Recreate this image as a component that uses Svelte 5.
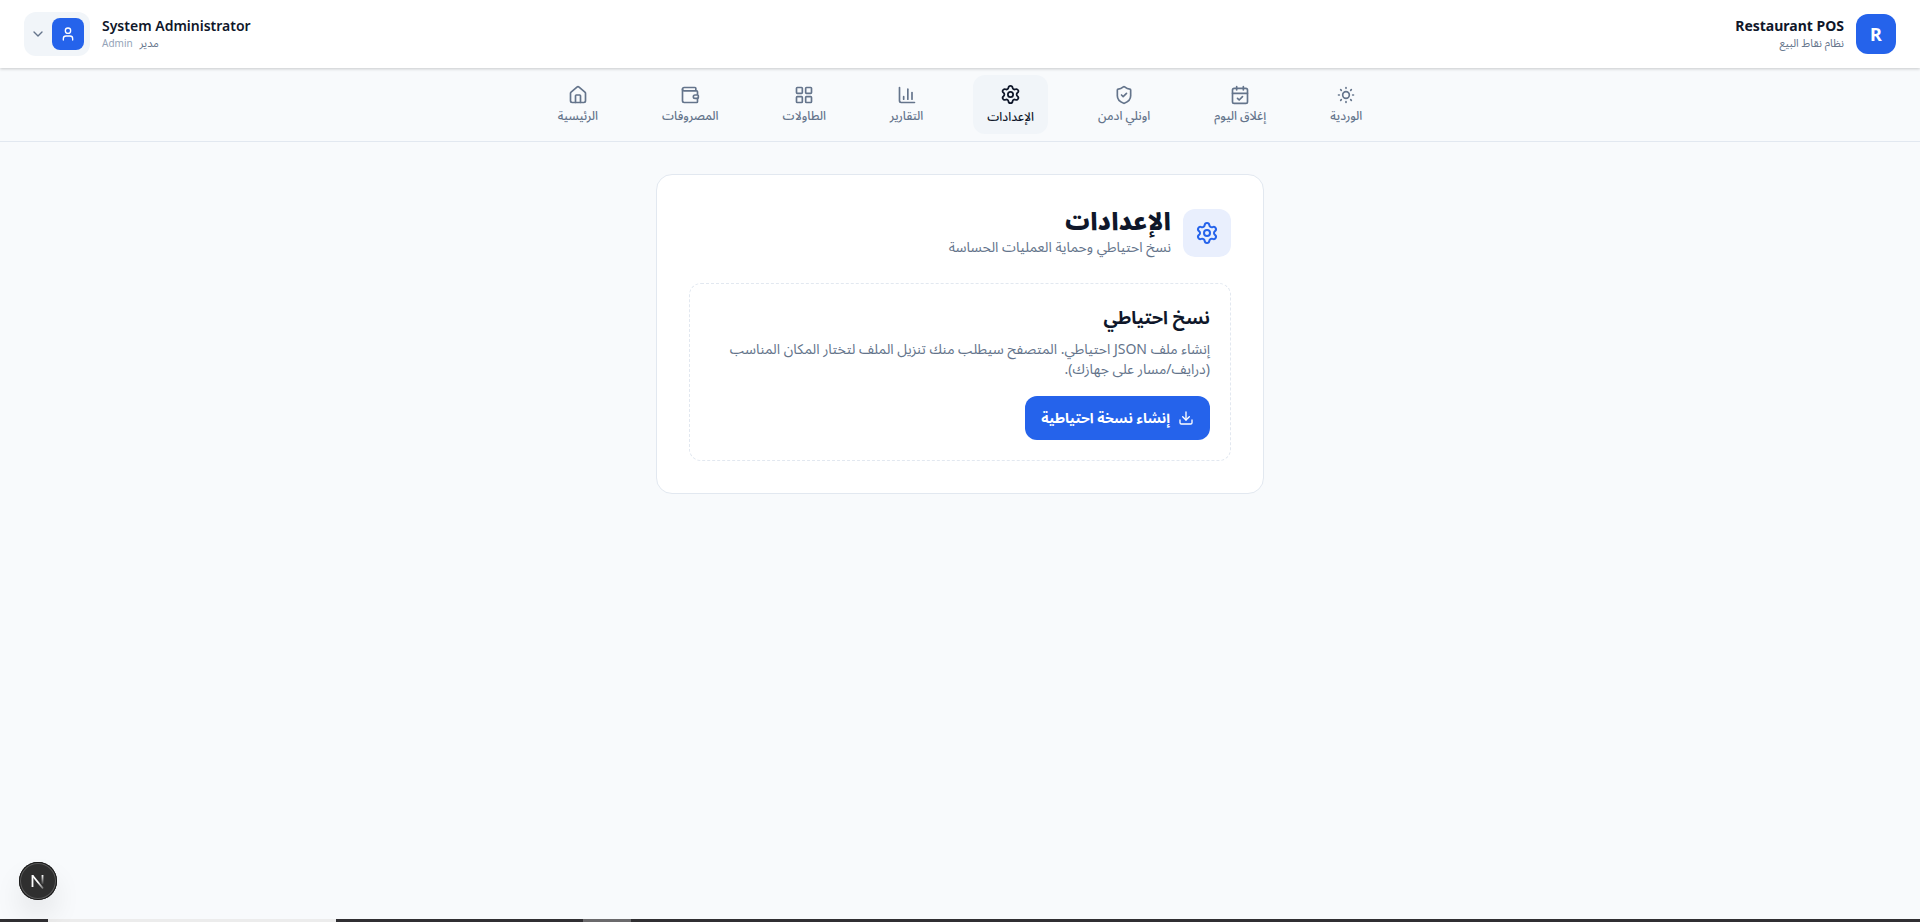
<script lang="ts">
	type NavItem = { label: string; icon: string; active?: boolean };

	// first item sits on the right
	const items: NavItem[] = [
		{ label: 'الوردية', icon: 'sun' },
		{ label: 'إغلاق اليوم', icon: 'calendar' },
		{ label: 'اونلي ادمن', icon: 'shield' },
		{ label: 'الإعدادات', icon: 'settings', active: true },
		{ label: 'التقارير', icon: 'chart' },
		{ label: 'الطاولات', icon: 'grid' },
		{ label: 'المصروفات', icon: 'wallet' },
		{ label: 'الرئيسية', icon: 'home' }
	];

	const icons: Record<string, string[]> = {
		sun: [
			'M16 12a4 4 0 1 1-8 0 4 4 0 0 1 8 0z',
			'M12 3v1', 'M12 20v1', 'M3 12h1', 'M20 12h1',
			'm18.364 5.636-.707.707', 'm6.343 17.657-.707.707',
			'm5.636 5.636.707.707', 'm17.657 17.657.707.707'
		],
		calendar: [
			'M8 2v4', 'M16 2v4',
			'M5 4h14a2 2 0 0 1 2 2v14a2 2 0 0 1-2 2H5a2 2 0 0 1-2-2V6a2 2 0 0 1 2-2z',
			'M3 10h18', 'm9 16 2 2 4-4'
		],
		shield: [
			'M20 13c0 5-3.5 7.5-7.66 8.95a1 1 0 0 1-.67-.01C7.5 20.5 4 18 4 13V6a1 1 0 0 1 1-1c2 0 4.5-1.2 6.24-2.72a1.17 1.17 0 0 1 1.52 0C14.51 3.81 17 5 19 5a1 1 0 0 1 1 1z',
			'm9 12 2 2 4-4'
		],
		settings: [
			'M9.671 4.136a2.34 2.34 0 0 1 4.659 0 2.34 2.34 0 0 0 3.319 1.915 2.34 2.34 0 0 1 2.33 4.033 2.34 2.34 0 0 0 0 3.831 2.34 2.34 0 0 1-2.33 4.033 2.34 2.34 0 0 0-3.319 1.915 2.34 2.34 0 0 1-4.659 0 2.34 2.34 0 0 0-3.32-1.915 2.34 2.34 0 0 1-2.33-4.033 2.34 2.34 0 0 0 0-3.831A2.34 2.34 0 0 1 6.35 6.051a2.34 2.34 0 0 0 3.319-1.915',
			'M15 12a3 3 0 1 1-6 0 3 3 0 0 1 6 0z'
		],
		chart: ['M3 3v16a2 2 0 0 0 2 2h16', 'M18 17V9', 'M13 17V5', 'M8 17v-3'],
		grid: [
			'M4 3h5a1 1 0 0 1 1 1v5a1 1 0 0 1-1 1H4a1 1 0 0 1-1-1V4a1 1 0 0 1 1-1z',
			'M15 3h5a1 1 0 0 1 1 1v5a1 1 0 0 1-1 1h-5a1 1 0 0 1-1-1V4a1 1 0 0 1 1-1z',
			'M15 14h5a1 1 0 0 1 1 1v5a1 1 0 0 1-1 1h-5a1 1 0 0 1-1-1v-5a1 1 0 0 1 1-1z',
			'M4 14h5a1 1 0 0 1 1 1v5a1 1 0 0 1-1 1H4a1 1 0 0 1-1-1v-5a1 1 0 0 1 1-1z'
		],
		wallet: [
			'M19 7V4a1 1 0 0 0-1-1H5a2 2 0 0 0 0 4h15a1 1 0 0 1 1 1v4h-3a2 2 0 0 0 0 4h3a1 1 0 0 0 1-1v-2a1 1 0 0 0-1-1',
			'M3 5v14a2 2 0 0 0 2 2h15a1 1 0 0 0 1-1v-4'
		],
		home: [
			'M15 21v-8a1 1 0 0 0-1-1h-4a1 1 0 0 0-1 1v8',
			'M3 10a2 2 0 0 1 .709-1.528l7-6a2 2 0 0 1 2.582 0l7 6A2 2 0 0 1 21 10v9a2 2 0 0 1-2 2H5a2 2 0 0 1-2-2z'
		],
		user: ['M19 21v-2a4 4 0 0 0-4-4H9a4 4 0 0 0-4 4v2', 'M16 7a4 4 0 1 1-8 0 4 4 0 0 1 8 0z'],
		chevron: ['m6 9 6 6 6-6'],
		download: ['M12 3v12', 'm7 10 5 5 5-5', 'M21 15v4a2 2 0 0 1-2 2H5a2 2 0 0 1-2-2v-4']
	};
</script>

{#snippet icon(name: string, size: number)}
	<svg class="icon" width={size} height={size} viewBox="0 0 24 24" aria-hidden="true">
		{#each icons[name] as d}
			<path {d} />
		{/each}
	</svg>
{/snippet}

<div class="page" dir="rtl">
	<header>
		<div class="brand">
			<div class="logo">R</div>
			<div>
				<div class="name">Restaurant POS</div>
				<div class="sub">نظام نقاط البيع</div>
			</div>
		</div>
		<div class="account">
			<div class="who">
				<div class="name">System Administrator</div>
				<div class="sub">مدير <span class="role">Admin</span></div>
			</div>
			<button class="user-menu" aria-label="System Administrator">
				<span class="avatar">{@render icon('user', 16)}</span>
				{@render icon('chevron', 16)}
			</button>
		</div>
	</header>

	<nav>
		{#each items as item}
			<a href="#{item.icon}" class:active={item.active}>
				{@render icon(item.icon, item.active ? 21 : 20)}
				<span>{item.label}</span>
			</a>
		{/each}
	</nav>

	<main>
		<section class="card">
			<div class="card-head">
				<div class="badge">{@render icon('settings', 24)}</div>
				<div class="title">
					<h1>الإعدادات</h1>
					<p>نسخ احتياطي وحماية العمليات الحساسة</p>
				</div>
			</div>
			<div class="panel">
				<h2>نسخ احتياطي</h2>
				<p>إنشاء ملف JSON احتياطي. المتصفح سيطلب منك تنزيل الملف لتختار المكان المناسب (درايف/مسار على جهازك).</p>
				<button class="primary">
					{@render icon('download', 16)}
					إنشاء نسخة احتياطية
				</button>
			</div>
		</section>
	</main>

	<div class="taskbar">
		<span class="window"></span>
		<span class="thumb"></span>
	</div>

	<button class="dev-tools" aria-label="Next.js">
		<svg width="38" height="38" viewBox="0 0 38 38" fill="none" aria-hidden="true">
			<defs>
				<linearGradient id="stem" x1="0" y1="13" x2="0" y2="23" gradientUnits="userSpaceOnUse">
					<stop stop-color="#fff" />
					<stop offset="1" stop-color="#fff" stop-opacity="0" />
				</linearGradient>
				<linearGradient id="diagonal" x1="19" y1="20" x2="24" y2="27" gradientUnits="userSpaceOnUse">
					<stop stop-color="#fff" />
					<stop offset="1" stop-color="#fff" stop-opacity="0.3" />
				</linearGradient>
			</defs>
			<path d="M13.5 25V13" stroke="#fff" stroke-width="1.8" />
			<path d="M13.5 13.5 24 26.5" stroke="url(#diagonal)" stroke-width="1.8" />
			<path d="M23.5 13v9" stroke="url(#stem)" stroke-width="1.8" />
		</svg>
	</button>
</div>

<style>
	:global(body) {
		margin: 0;
		background: #f8fafc;
	}
	.page {
		display: flex;
		flex-direction: column;
		min-height: 100vh;
		color: #0f172a;
		font-family: "Noto Sans", "Noto Sans Arabic", sans-serif;
		font-size: 14px;
		line-height: 20px;
	}
	h1, h2, p {
		margin: 0;
	}
	button {
		font: inherit;
		border: none;
		cursor: pointer;
	}
	.icon {
		flex: none;
		fill: none;
		stroke: currentColor;
		stroke-width: 2;
		stroke-linecap: round;
		stroke-linejoin: round;
	}

	header {
		position: relative;
		display: flex;
		justify-content: space-between;
		align-items: center;
		padding: 12px 24px;
		background: #fff;
		box-shadow: 0 1px 3px rgba(0, 0, 0, 0.2);
	}
	.brand, .account {
		display: flex;
		align-items: center;
		gap: 12px;
	}
	.logo {
		display: flex;
		align-items: center;
		justify-content: center;
		width: 40px;
		height: 40px;
		border-radius: 12px;
		background: #2563eb;
		color: #fff;
		font-size: 18px;
		font-weight: 700;
	}
	.name {
		font-weight: 600;
		line-height: 18px;
	}
	.brand .name {
		font-weight: 700;
	}
	.sub {
		color: #64748b;
		font-size: 11px;
		line-height: 16px;
	}
	.who {
		text-align: left;
	}
	.role {
		margin-right: 4px;
		color: #94a3b8;
		font-size: 10px;
	}
	.user-menu {
		display: flex;
		align-items: center;
		gap: 6px;
		padding: 6px;
		border-radius: 12px;
		background: #f1f5f9;
		color: #64748b;
	}
	.avatar {
		display: flex;
		align-items: center;
		justify-content: center;
		width: 32px;
		height: 32px;
		border-radius: 8px;
		background: #2563eb;
		color: #fff;
	}

	nav {
		display: flex;
		justify-content: center;
		align-items: center;
		gap: 40px;
		padding: 7px 16px;
		border-bottom: 1px solid #e2e8f0;
	}
	nav a {
		display: flex;
		flex-direction: column;
		align-items: center;
		gap: 3px;
		padding: 8px 12px;
		border-radius: 12px;
		color: #64748b;
		font-size: 12px;
		font-weight: 500;
		line-height: 16px;
		text-decoration: none;
	}
	nav a.active {
		margin: 0 -2px;
		padding: 9px 14px 8px;
		background: #f1f5f9;
		color: #0f172a;
		line-height: 18px;
	}

	main {
		flex: 1;
		padding: 32px 16px;
	}
	.card {
		box-sizing: border-box;
		max-width: 608px;
		margin: 0 auto;
		padding: 32px;
		border: 1px solid #e2e8f0;
		border-radius: 16px;
		background: #fff;
	}
	.card-head {
		display: flex;
		align-items: center;
		gap: 12px;
		margin-bottom: 24px;
	}
	.badge {
		display: flex;
		align-items: center;
		justify-content: center;
		width: 48px;
		height: 48px;
		border-radius: 12px;
		background: #e9effd;
		color: #2563eb;
	}
	.title {
		padding-bottom: 2px;
	}
	h1 {
		margin-bottom: 2px;
		font-size: 24px;
		font-weight: 900;
		line-height: 28px;
	}
	p {
		color: #64748b;
	}
	.panel {
		padding: 20px;
		border: 1px dashed #e2e8f0;
		border-radius: 12px;
	}
	h2 {
		margin-bottom: 9px;
		font-size: 18px;
		font-weight: 700;
		line-height: 26px;
	}
	.primary {
		display: flex;
		align-items: center;
		gap: 8px;
		margin-top: 17px;
		padding: 12px 16px;
		border-radius: 12px;
		background: #2563eb;
		color: #fff;
		font-weight: 700;
	}

	.taskbar {
		display: flex;
		direction: ltr;
		height: 3px;
		background: #302f32;
	}
	.window {
		width: 15%;
		margin-left: 48px;
		background: #ececec;
	}
	.thumb {
		width: 48px;
		margin-left: 247px;
		background: #6b6a6c;
	}
	.dev-tools {
		position: fixed;
		bottom: 22px;
		left: 19px;
		width: 38px;
		height: 38px;
		padding: 0;
		border-radius: 50%;
		background: #2f2f2f;
		box-shadow: inset 0 0 0 1px #171717, inset 0 0 0 2px #5a5a5a, 0 16px 32px -8px rgba(0, 0, 0, 0.24);
	}
</style>
